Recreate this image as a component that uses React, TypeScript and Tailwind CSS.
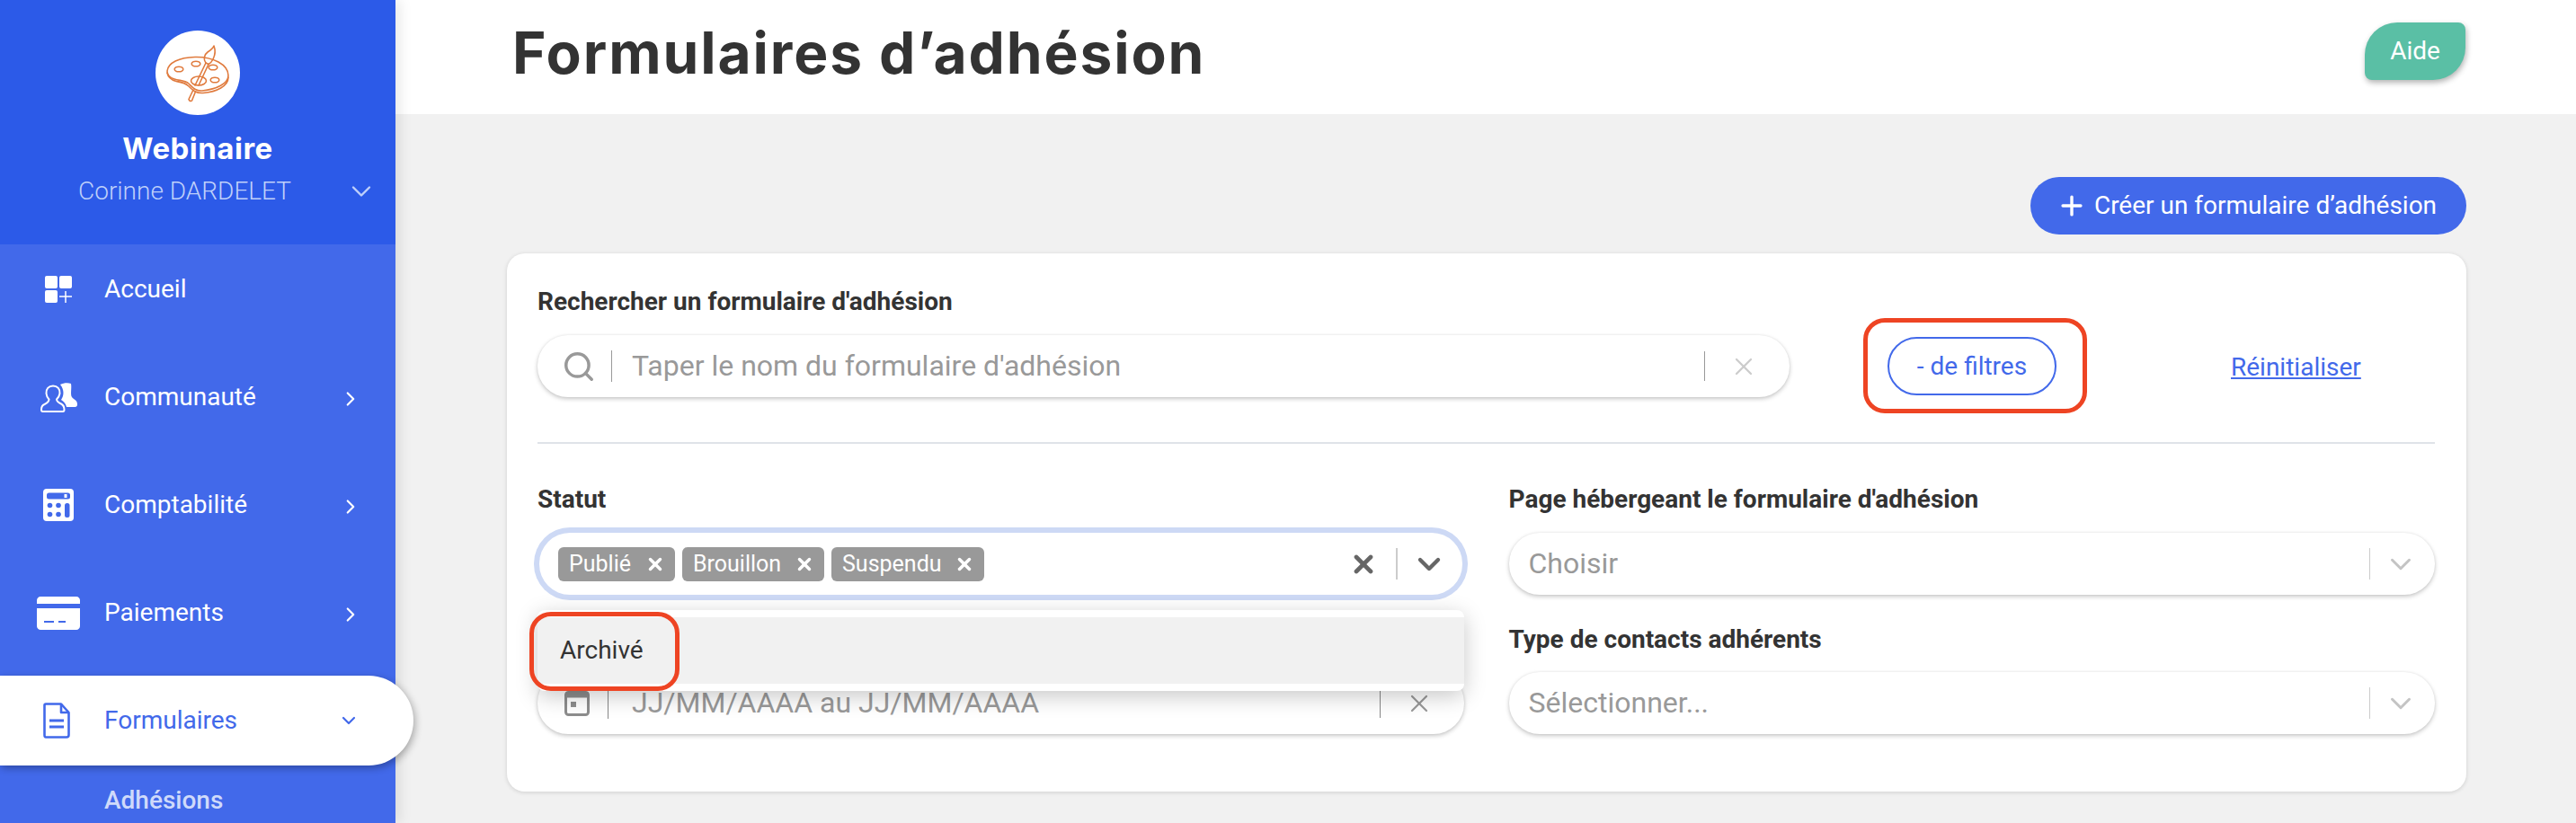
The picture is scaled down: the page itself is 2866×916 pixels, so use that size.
import { ChevronDown, ChevronRight, Plus, Search, X } from 'lucide-react';

const Palette = () => (
  <svg viewBox="0 0 94 94" className="h-[94px] w-[94px]" fill="none" stroke="#e07b3e" strokeWidth="1.6" strokeLinejoin="round" strokeLinecap="round">
    <path d="M13 45C14 36 26 30 44 29.500C64 29 81 38 81 50C81 59 68 65.500 52 67C44 67.500 41 63 37 59C32 55 27 56 21 54C16 52.500 13 50 13 45Z" />
    <path d="M13 47C14 52 18 55 23 56.500C29 57.500 33 58 37 62C42 67 45 70 53 69.500C68 68 81 62 81 52" />
    <ellipse cx="26" cy="43" rx="4.800" ry="2.800" />
    <ellipse cx="45" cy="37" rx="4.800" ry="2.800" />
    <ellipse cx="64" cy="41" rx="4.800" ry="2.800" />
    <ellipse cx="66" cy="55" rx="4.800" ry="2.800" />
    <ellipse cx="48" cy="56" rx="8.500" ry="5" />
    <path d="M56 36L44 61M59 37.500L48 61M42 66L37 76.500C37.500 78.500 39.500 79 40.500 78L44.500 68" />
    <path d="M56 36C53 32 54 27 58 24C61 22 64 20 65 17C66.500 21 66.500 27 64 32C62.500 35 60 37 59 37.500Z" />
  </svg>
);

const HomeIcon = () => (
  <svg viewBox="0 0 30 30" className="h-[30px] w-[30px]">
    <rect x="0" y="0" width="14" height="14" rx="2" fill="white" />
    <rect x="16" y="0" width="14" height="14" rx="2" fill="white" />
    <rect x="0" y="16" width="14" height="14" rx="2" fill="white" />
    <path d="M23 17V30M16 23H30" stroke="white" strokeWidth="1.500" />
  </svg>
);

const PeopleIcon = () => (
  <svg viewBox="0 0 41 33" className="h-[33px] w-[41px]">
    <path d="M22 2C26 0 31 0 34 1C35 6 33 13 35 16C37 19 41 19 41 24C41 27 39 27 37 27H29C28 23 26 21 23 19C26 15 27 8 22 2Z" fill="white" />
    <path d="M14 3.500C19 3.500 22 7 21.500 12C21 15 19.500 17 18 18.500C18 21 20 22 23 23.500C26 25 26.500 27 26.500 30C26.500 31 26 32 25 32H2.500C1.300 32 1 31 1 30C1 27 2 25 4.500 24C7.500 22.500 9.500 21 9.500 18.500C8 17 6.800 15 6.500 12C6 7 9 3.500 14 3.500Z" fill="none" stroke="white" strokeWidth="2" />
  </svg>
);

const CalcIcon = () => (
  <svg viewBox="0 0 34 36" className="h-[36px] w-[34px]">
    <rect x="0" y="0" width="34" height="36" rx="4" fill="white" />
    <rect x="4" y="4.500" width="26" height="7" rx="2.500" fill="#4269ea" />
    <rect x="23.500" y="6" width="3" height="4" fill="white" />
    <circle cx="7.500" cy="18.500" r="2.800" fill="#4269ea" />
    <circle cx="17" cy="18.500" r="2.800" fill="#4269ea" />
    <circle cx="7.500" cy="28.500" r="2.800" fill="#4269ea" />
    <circle cx="17" cy="28.500" r="2.800" fill="#4269ea" />
    <rect x="24" y="16" width="5.500" height="16" rx="2.500" fill="#4269ea" />
  </svg>
);

const CardIcon = () => (
  <svg viewBox="0 0 48 37" className="h-[37px] w-[48px]">
    <path d="M4 0H44C46 0 48 2 48 4V8H0V4C0 2 2 0 4 0Z" fill="white" />
    <path d="M0 13H48V33C48 35 46 37 44 37H4C2 37 0 35 0 33V13Z" fill="white" />
    <path d="M8 28H19M24 28H32" stroke="#4269ea" strokeWidth="2.200" />
  </svg>
);

const DocIcon = () => (
  <svg viewBox="0 0 30 40" className="h-[40px] w-[30px]" fill="none" stroke="#4269ea" strokeWidth="2.600" strokeLinejoin="round">
    <path d="M3 1.500H20L28.500 11V36C28.500 37.500 27.500 38.500 26 38.500H3C2 38.500 1.500 37.500 1.500 36V3C1.500 2 2 1.500 3 1.500Z" />
    <path d="M20 1.500V11H28.500" />
    <path d="M7 20H23M7 27H23" strokeWidth="3" />
  </svg>
);

const CalendarIcon = () => (
  <svg viewBox="0 0 28 28" className="h-[28px] w-[28px]">
    <rect x="1.500" y="1.500" width="25" height="25" rx="3" fill="none" stroke="#8d8d8d" strokeWidth="3" />
    <rect x="1.500" y="1.500" width="25" height="6" fill="#8d8d8d" />
    <rect x="7" y="12" width="6" height="6" fill="#8d8d8d" />
  </svg>
);

const menu = [
  { label: 'Accueil', icon: <HomeIcon /> },
  { label: 'Communauté', icon: <PeopleIcon />, arrow: true },
  { label: 'Comptabilité', icon: <CalcIcon />, arrow: true },
  { label: 'Paiements', icon: <CardIcon />, arrow: true },
];

const fieldClass =
  'flex h-[69px] items-center rounded-[34px] bg-white shadow-[0_2px_5px_rgba(0,0,0,0.22),0_0_3px_rgba(0,0,0,0.06)]';
const labelClass = 'h-7 text-[28px] leading-7 font-bold text-[#333333]';

const Sidebar = () => (
  <aside className="relative z-20 flex h-full w-[440px] shrink-0 flex-col bg-[#4269ea] font-[Roboto,sans-serif] shadow-[4px_0_14px_rgba(0,0,0,0.1)]">
    <div className="flex h-[272px] shrink-0 flex-col items-center bg-[#2c5ae8] pt-[34px]">
      <div className="flex h-[94px] w-[94px] items-center justify-center rounded-full bg-white">
        <Palette />
      </div>
      <p className="mt-[18px] font-[Inter,sans-serif] text-[33px] leading-[38px] font-bold tracking-[0.5px] text-white">
        Webinaire
      </p>
      <div className="mt-[13px] flex h-8 w-full items-center pr-[20px] pl-[87px]">
        <span className="text-[28px] leading-8 font-light text-[#bfd0fa]">Corinne DARDELET</span>
        <ChevronDown className="ml-auto shrink-0 text-[#bfd0fa]" size={36} strokeWidth={1.600} />
      </div>
    </div>
    <nav className="flex flex-col">
      {menu.map((item) => (
        <div key={item.label} className="mb-5 flex h-[100px] items-center text-white">
          <div className="flex w-[116px] pl-[40px]">
            <div className="flex w-[50px] justify-center">{item.icon}</div>
          </div>
          <span className="text-[28px] leading-8">{item.label}</span>
          {item.arrow && (
            <ChevronRight className="mt-1 mr-[37px] ml-auto" size={26} strokeWidth={2} />
          )}
        </div>
      ))}
      <div className="flex h-[100px] w-[460px] items-center rounded-r-[50px] bg-white text-[#4269ea] shadow-[2px_3px_8px_rgba(0,0,0,0.3)]">
        <div className="flex w-[116px] pl-[38px]">
          <div className="flex w-[50px] justify-center">
            <DocIcon />
          </div>
        </div>
        <span className="text-[28px] leading-8">Formulaires</span>
        <ChevronDown className="mr-[60px] ml-auto" size={24} strokeWidth={2.200} />
      </div>
      <p className="mt-[24px] pl-[116px] text-[28px] leading-[30px] font-medium text-[#cfdafa]">
        Adhésions
      </p>
    </nav>
  </aside>
);

const Tag = ({ label, width }: { label: string; width: string }) => (
  <span className={`flex h-[38px] items-center justify-between rounded-[6px] bg-[#999999] pr-[11px] pl-[12px] text-[25px] text-white ${width}`}>
    {label}
    <X size={22} strokeWidth={3.800} />
  </span>
);

const PlaceholderSelect = ({ text }: { text: string }) => (
  <div className={fieldClass}>
    <span className="mb-[1px] pl-[22px] text-[32px] text-[#999999]">{text}</span>
    <span className="mr-[15px] ml-auto h-[35px] w-px bg-[#cccccc]" />
    <ChevronDown className="mr-[19px] text-[#c4c4c4]" size={38} strokeWidth={1.900} />
  </div>
);

const App = () => {
  return (
    <div className="flex h-[916px] w-[2866px] overflow-hidden bg-[#f1f1f1] font-[Roboto,sans-serif]">
      <Sidebar />
      <main className="min-w-0 flex-1">
        <header className="flex h-[127px] items-center justify-between bg-white pr-[123px] pl-[130px]">
          <h1 className="mb-[10px] font-[Inter,sans-serif] text-[64px] font-bold tracking-[1.9px] text-[#333333]">
            Formulaires d’adhésion
          </h1>
          <button className="mb-[13px] flex h-[64px] w-[112px] items-center justify-center rounded-tl-[36px] rounded-tr-[8px] rounded-br-[36px] rounded-bl-[8px] bg-[#5abfa5] text-[28px] text-white shadow-[1px_3px_6px_rgba(0,0,0,0.3)]">
            Aide
          </button>
        </header>

        <div className="pt-[70px] pr-[122px] pl-[124px]">
          <div className="flex justify-end">
            <button className="flex h-[64px] w-[485px] items-center justify-center gap-[8px] rounded-[32px] bg-[#4269ea] pr-[4px] text-[28px] text-white">
              <Plus size={34} strokeWidth={2.400} />
              Créer un formulaire d’adhésion
            </button>
          </div>

          <section className="mt-[21px] h-[599px] rounded-[20px] bg-white pt-[40px] pr-[35px] pl-[34px] shadow-[0_1px_5px_rgba(0,0,0,0.14)]">
            <p className={labelClass}>Rechercher un formulaire d'adhésion</p>
            <div className="mt-[23px] flex items-center">
              <div className={`${fieldClass} w-[1393px]`}>
                <Search className="ml-[27px] text-[#999999]" size={38} strokeWidth={2.200} />
                <span className="ml-[17px] h-[35px] w-px bg-[#999999]" />
                <span className="mb-[1px] ml-[22px] text-[32px] text-[#999999]">
                  Taper le nom du formulaire d'adhésion
                </span>
                <span className="mr-[27px] ml-auto h-[33px] w-px bg-[#999999]" />
                <X className="mr-[35px] text-[#cccccc]" size={32} strokeWidth={1.700} />
              </div>
              <div className="relative ml-[109px]">
                <button className="h-[65px] w-[188px] rounded-[33px] border-2 border-[#4269ea] text-[28px] text-[#4269ea]">
                  - de filtres
                </button>
                <div className="absolute -top-[21px] -right-[34px] -bottom-[20px] -left-[27px] rounded-[24px] border-[5px] border-[#ee4423]" />
              </div>
              <a className="mt-[2px] ml-[194px] text-[28px] text-[#4269ea] underline">Réinitialiser</a>
            </div>

            <div className="mt-[50px] h-[2px] bg-[#dfe3e8]" />

            <div className="mt-[48px] grid grid-cols-2 gap-x-[50px]">
              <div>
                <p className={labelClass}>Statut</p>
                <div className="relative z-10 mt-[23px]">
                  <div className={`${fieldClass} mx-[2px] ring-[6px] ring-[#cdd9f5]`}>
                    <div className="flex gap-2 pl-[21px]">
                      <Tag label="Publié" width="w-[130px]" />
                      <Tag label="Brouillon" width="w-[158px]" />
                      <Tag label="Suspendu" width="w-[170px]" />
                    </div>
                    <X className="mr-[20px] ml-auto text-[#666666]" size={32} strokeWidth={3.500} />
                    <span className="mr-[15px] h-[35px] w-[2px] bg-[#cccccc]" />
                    <ChevronDown className="mr-[17px] text-[#666666]" size={40} strokeWidth={2.600} />
                  </div>
                  <div className="absolute top-[86px] right-0 left-0 h-[90px] rounded-[8px] bg-white py-2 shadow-[0_6px_24px_rgba(0,0,0,0.22)]">
                    <div className="flex h-[74px] items-center bg-[#f1f1f1] pl-[25px] text-[28px] text-[#333333]">
                      Archivé
                    </div>
                    <div className="absolute top-[2px] -left-[9px] h-[88px] w-[167px] rounded-[24px] border-[5px] border-[#ee4423]" />
                  </div>
                </div>
              </div>
              <div>
                <p className={labelClass}>Page hébergeant le formulaire d'adhésion</p>
                <div className="mt-[23px]">
                  <PlaceholderSelect text="Choisir" />
                </div>
              </div>
              <div className="mt-[36px]">
                <div className="h-7" />
                <div className={`${fieldClass} mt-[22px]`}>
                  <div className="ml-[30px]">
                    <CalendarIcon />
                  </div>
                  <span className="ml-[20px] h-[35px] w-px bg-[#888888]" />
                  <span className="mb-[1px] ml-[26px] text-[32px] text-[#999999]">JJ/MM/AAAA au JJ/MM/AAAA</span>
                  <span className="mr-[27px] ml-auto h-[33px] w-px bg-[#888888]" />
                  <X className="mr-[34px] text-[#999999]" size={32} strokeWidth={1.700} />
                </div>
              </div>
              <div className="mt-[36px]">
                <p className={labelClass}>Type de contacts adhérents</p>
                <div className="mt-[22px]">
                  <PlaceholderSelect text="Sélectionner..." />
                </div>
              </div>
            </div>
          </section>
        </div>
      </main>
    </div>
  );
};

export default App;
